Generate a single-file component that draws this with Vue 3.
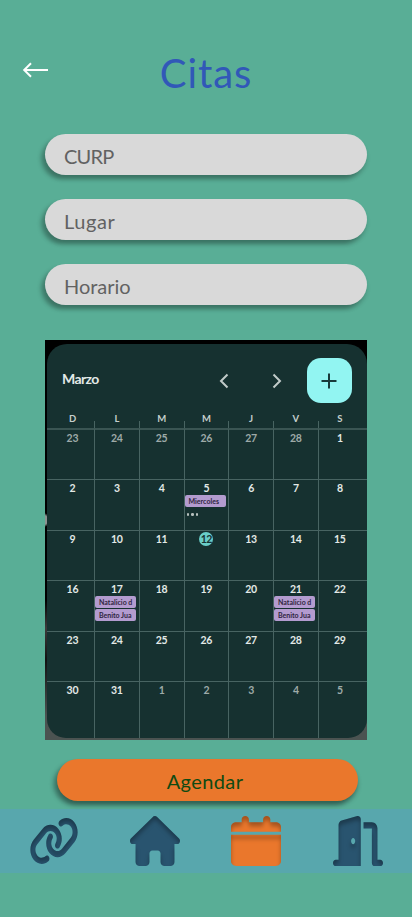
<script setup>
const fields = [
  { label: 'CURP', tone: 'caps' },
  { label: 'Lugar', tone: 'wide' },
  { label: 'Horario', tone: 'normal' }
]
const weekdays = ['D', 'L', 'M', 'M', 'J', 'V', 'S']
const holiday = ['Natalicio d', 'Benito Jua']
const marks = { 10: { events: ['Miercoles'], more: true }, 17: { today: true }, 22: { events: holiday }, 26: { events: holiday } }
const days = Array.from({ length: 42 }, (_, i) => {
  const n = i - 5
  const outside = n < 1 || n > 31
  const label = n < 1 ? n + 28 : n > 31 ? n - 31 : n
  return { label, outside, events: [], ...(marks[i] || {}) }
})
</script>

<template>
  <main class="screen">
    <header class="top">
      <svg class="back" viewBox="0 0 26 16"><path d="M26 8H2M9 1.2L2.2 8l6.8 6.8" /></svg>
      <h1>Citas</h1>
    </header>

    <form class="fields">
      <div v-for="f in fields" :key="f.label" class="field" :class="f.tone"><span>{{ f.label }}</span></div>
    </form>

    <section class="frame">
      <div class="calendar">
        <div class="bar">
          <strong>Marzo</strong>
          <svg class="chev left" viewBox="0 0 10 16"><path d="M8.5 1.5L2 8l6.5 6.5" /></svg>
          <svg class="chev right" viewBox="0 0 10 16"><path d="M1.5 1.5L8 8l-6.5 6.5" /></svg>
          <span class="add"><svg viewBox="0 0 16 16"><path d="M8 .5v15M.5 8h15" /></svg></span>
        </div>
        <div class="grid week">
          <span v-for="(w, i) in weekdays" :key="i"><b>{{ w }}</b></span>
        </div>
        <div class="grid month">
          <div v-for="(d, i) in days" :key="i" class="cell" :class="{ outside: d.outside }">
            <div class="num"><b :class="{ today: d.today }">{{ d.label }}</b></div>
            <div v-for="e in d.events" :key="e" class="event">{{ e }}</div>
            <div v-if="d.more" class="more"><i /><i /><i /></div>
          </div>
        </div>
      </div>
    </section>

    <button class="submit"><span>Agendar</span></button>

    <nav class="nav">
      <svg width="0" height="0" class="defs">
        <filter id="inset" filterUnits="userSpaceOnUse" x="-10" y="-10" width="70" height="70" color-interpolation-filters="sRGB">
          <feOffset in="SourceAlpha" dy="4" />
          <feGaussianBlur stdDeviation="2" result="soft" />
          <feComposite in="SourceAlpha" in2="soft" operator="out" result="edge" />
          <feFlood flood-color="#000" flood-opacity="0.3" />
          <feComposite in2="edge" operator="in" result="shade" />
          <feMerge><feMergeNode in="SourceGraphic" /><feMergeNode in="shade" /></feMerge>
        </filter>
      </svg>
      <svg class="icon" viewBox="0 0 50 50"><g filter="url(#inset)"><path transform="scale(.078125 .09765625)" d="M579.8 267.7c56.5-56.5 56.5-148 0-204.5c-50-50-128.8-56.5-186.3-15.4l-1.6 1.1c-14.4 10.3-17.7 30.3-7.4 44.6s30.3 17.7 44.6 7.4l1.6-1.1c32.1-22.9 76-19.3 103.8 8.6c31.5 31.5 31.5 82.5 0 114L422.3 334.8c-31.5 31.5-82.5 31.5-114 0c-27.9-27.9-31.5-71.8-8.6-103.8l1.1-1.6c10.3-14.4 6.9-34.4-7.4-44.6s-34.4-6.9-44.6 7.4l-1.1 1.6C206.5 251.2 213 330 263 380c56.5 56.5 148 56.5 204.5 0L579.8 267.7zM60.2 244.3c-56.5 56.5-56.5 148 0 204.5c50 50 128.8 56.5 186.3 15.4l1.6-1.1c14.4-10.3 17.7-30.3 7.4-44.6s-30.3-17.7-44.6-7.4l-1.6 1.1c-32.1 22.9-76 19.3-103.8-8.6C74 372 74 321 105.5 289.5L217.7 177.2c31.5-31.5 82.5-31.5 114 0c27.9 27.9 31.5 71.8 8.6 103.9l-1.1 1.6c-10.3 14.4-6.9 34.4 7.4 44.6s34.4 6.9 44.6-7.4l1.1-1.6C433.5 260.8 427 182 377 132c-56.5-56.5-148-56.5-204.5 0L60.2 244.3z" /></g></svg>
      <svg class="icon" viewBox="0 0 50 50"><g filter="url(#inset)"><path transform="scale(.0868056 .09765625)" d="M575.8 255.5c0 18-15 32.1-32 32.1h-32l.7 160.2c0 2.7-.2 5.4-.5 8.1V472c0 22.1-17.9 40-40 40H456c-1.1 0-2.2 0-3.3-.1c-1.4 .1-2.8 .1-4.2 .1H416 392c-22.1 0-40-17.9-40-40V448 384c0-17.7-14.3-32-32-32H256c-17.7 0-32 14.3-32 32v64 24c0 22.1-17.9 40-40 40H160 128.1c-1.5 0-3-.1-4.5-.2c-1.2 .1-2.4 .2-3.6 .2H104c-22.1 0-40-17.9-40-40V360c0-.9 0-1.9 .1-2.8V287.6H32c-18 0-32-14-32-32.1c0-9 3-17 10-24L266.4 8c7-7 15-8 22-8s15 2 21 7L564.8 231.5c8 7 12 15 11 24z" /></g></svg>
      <svg class="icon active" viewBox="0 0 50 50"><g filter="url(#inset)"><path transform="scale(.1116071 .09765625)" d="M96 32V64H48C21.5 64 0 85.5 0 112v48H448V112c0-26.5-21.5-48-48-48H352V32c0-17.7-14.3-32-32-32s-32 14.3-32 32V64H160V32c0-17.7-14.3-32-32-32S96 14.3 96 32zM448 192H0V464c0 26.5 21.5 48 48 48H400c26.5 0 48-21.5 48-48V192z" /></g></svg>
      <svg class="icon" viewBox="0 0 50 50"><g filter="url(#inset)"><path transform="scale(.0868056 .09765625)" d="M320 32c0-9.9-4.5-19.2-12.3-25.2S289.8-1.4 280.2 1l-179.9 45C79 51.3 64 70.5 64 92.5V448H32c-17.7 0-32 14.3-32 32s14.3 32 32 32H96 288h32V480 32zM256 256c0 17.7-10.7 32-24 32s-24-14.3-24-32s10.7-32 24-32s24 14.3 24 32zm96-128h96V480c0 17.7 14.3 32 32 32h64c17.7 0 32-14.3 32-32s-14.3-32-32-32H512V128c0-35.3-28.7-64-64-64H352v64z" /></g></svg>
    </nav>
  </main>
</template>

<style>
body { margin: 0; background: #59ae96; }
</style>

<style scoped>
* { box-sizing: border-box; }
.screen { width: 412px; height: 917px; background: #59ae96; font-family: Lato, "Open Sans", sans-serif; display: flex; flex-direction: column; overflow: hidden; }
svg { display: block; flex: none; }
.top { height: 134px; display: grid; grid-template-columns: 60px 1fr 60px; padding-top: 50px; }
.back { width: 26px; height: 16px; margin: 12px 0 0 22px; fill: none; stroke: #fff; stroke-width: 2; }
h1 { margin: 0; font-size: 40px; line-height: 47px; font-weight: 400; letter-spacing: .9px; text-align: center; color: #3158b8; }
.fields { display: flex; flex-direction: column; gap: 24px; padding: 0 45px; }
.field { height: 41px; border-radius: 21px; background: #d9d9d9; box-shadow: -4px 4px 4px rgba(0, 0, 0, .25), 0 4px 4px rgba(0, 0, 0, .12); padding: 10px 19px 0; color: #626262; font-size: 20px; line-height: 25px; }
.caps { letter-spacing: -.8px; }
.wide { letter-spacing: .6px; }
.normal { letter-spacing: -.05px; }
.frame { width: 322px; height: 400px; margin: 35px 0 0 45px; padding: 4px 0 2px 2px; background: radial-gradient(ellipse 4px 7px at 0 180px, #8d9391 60%, transparent), linear-gradient(#000 0 65%, #3d3b3b 72%, #111 80%, #4b5351 94%); }
.calendar { height: 394px; border-radius: 20px 20px 19px 19px; background: #163130; overflow: hidden; display: flex; flex-direction: column; color: #e3e9e7; }
.bar { height: 77px; flex: none; display: flex; align-items: flex-start; padding: 14px 15px 0; }
.bar strong { width: 157px; font-size: 14px; line-height: 18px; margin-top: 12px; letter-spacing: -.6px; }
.chev { width: 10px; height: 16px; margin-top: 15px; fill: none; stroke: #c1cbc9; stroke-width: 2; }
.right { margin-left: 43px; }
.add { width: 45px; height: 45px; margin-left: auto; border-radius: 14px; background: #92f5f2; display: grid; place-items: center; }
.add svg { width: 16px; height: 16px; margin-right: 2px; stroke: #173a3a; stroke-width: 2; }
.grid { display: grid; grid-template-columns: 48px repeat(5, 44.75px) 48.25px; }
.week { height: 7px; flex: none; }
.week span { border-right: 1px solid #486462; text-align: center; font-size: 9.5px; line-height: 12px; color: #c5cfcc; }
.week b { display: block; margin-top: -8px; }
.week span:last-child, .cell:nth-child(7n) { border-right: 0; padding-right: 6px; }
.week span:first-child, .cell:nth-child(7n + 1) { padding-left: 4px; }
.month { grid-template-rows: 51px repeat(4, 50.6px) 57px; }
.cell { border-top: 1px solid #486462; border-right: 1px solid #486462; min-width: 0; overflow: hidden; }
.cell:nth-child(-n + 7) { border-top: 2px solid #3a5553; }
.num { height: 15px; display: flex; justify-content: center; align-items: center; padding-top: 1px; font-size: 10.5px; line-height: 14px; letter-spacing: -.2px; }
.outside .num { color: #9eaaa8; }
.today { width: 14px; height: 14px; border-radius: 50%; background: #69cec9; color: #173332; text-align: center; letter-spacing: -.4px; }
.event { width: 41px; height: 12px; margin-bottom: 1px; border-radius: 2px; background: #b39bcf; color: #302540; font-size: 7px; line-height: 12px; font-weight: 700; padding-left: 4px; white-space: nowrap; }
.more { display: flex; gap: 2px; padding: 5px 0 0 2px; }
.more i { width: 2.5px; height: 2.5px; border-radius: 50%; background: #b7c1be; }
.submit { width: 301px; height: 42px; flex: none; margin: 19px 0 0 57px; padding: 3px 0 0; border: 0; border-radius: 21px; background: #ea772c; color: #0f4a12; font: 400 20px/25px Lato, sans-serif; letter-spacing: .4px; box-shadow: -4px 4px 4px rgba(0, 0, 0, .25), 0 4px 4px rgba(0, 0, 0, .25); position: relative; z-index: 1; }
.submit span { margin-right: 5px; }
.nav { height: 64px; flex: none; margin-top: 8px; background: #58a7ad; display: grid; grid-template-columns: 101px 101px 102px 50px; padding: 7px 29px; }
.icon { width: 50px; height: 50px; fill: #29546f; }
.active { fill: #ea772c; }
.defs { position: absolute; }
</style>
